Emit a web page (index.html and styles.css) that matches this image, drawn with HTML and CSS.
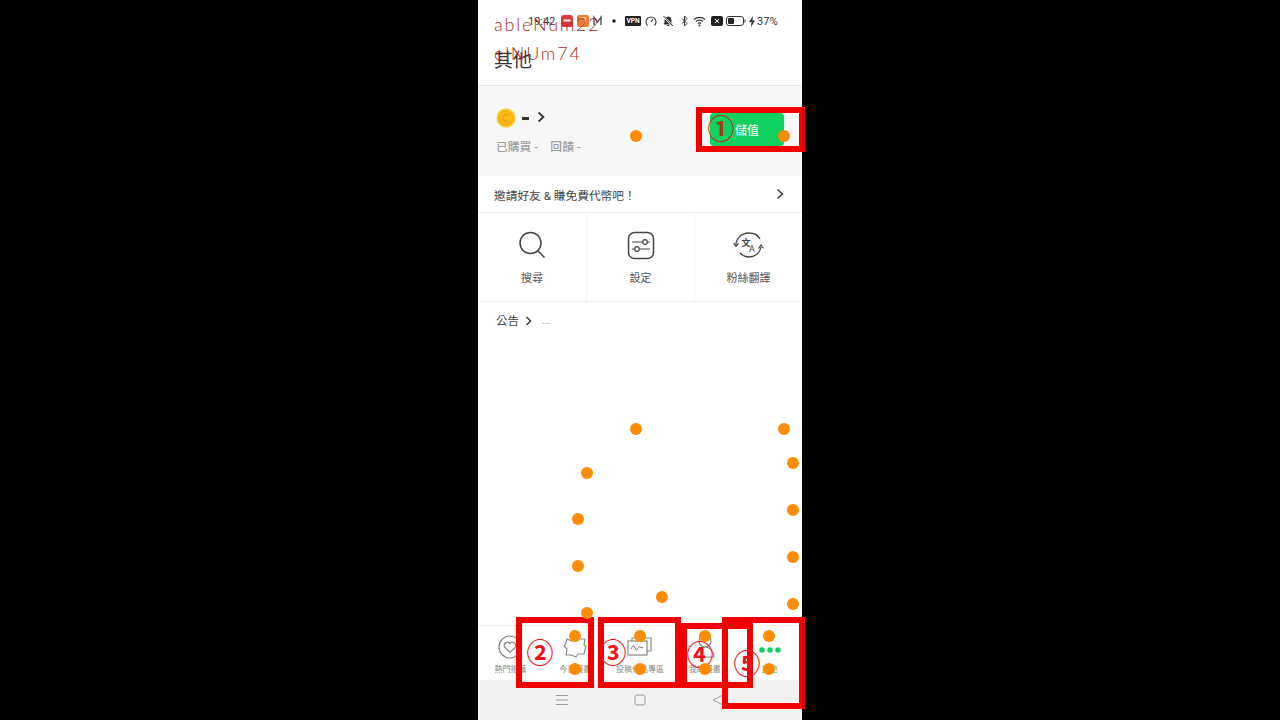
FILE: index.html
```html
<!DOCTYPE html>
<html lang="zh-Hant">
<head>
  <meta charset="UTF-8">
  <meta name="viewport" content="width=device-width, initial-scale=1.0">
  <title>其他</title>
  <link rel="stylesheet" href="styles.css">
</head>
<body>
  <div class="phone">
    <div class="status-bar">
      <span class="clock">19:42</span>
      <svg class="status-apps" width="58" height="14" viewBox="0 0 58 14">
        <rect x="0" y="1" width="12" height="12" rx="3" fill="#e5333b"/>
        <rect x="2.500" y="5.500" width="7" height="2" fill="#fff"/>
        <rect x="16" y="1" width="12" height="12" rx="2" fill="#ef7d2b"/>
        <path d="M19 4h6l-2 3h2l-4 4" fill="none" stroke="#fff" stroke-width="1"/>
        <path d="M33 11V3l3.500 5L40 3v8" fill="none" stroke="#444" stroke-width="1.300"/>
        <circle cx="53" cy="7" r="1.800" fill="#222"/>
      </svg>
      <span class="status-right">
        <span class="vpn">VPN</span>
        <svg width="12" height="12" viewBox="0 0 12 12"><path d="M2.500 10.500a5 5 0 1 1 7 0" fill="none" stroke="#333" stroke-width="1.100"/><path d="M6 7l2-3" stroke="#333" stroke-width="1.100"/></svg>
        <svg width="14" height="12" viewBox="0 0 14 12"><path d="M3 9h8l-1-1.500V5a3 3 0 0 0-6 0v2.500zM6 10.500h2" fill="#333" stroke="#333"/><path d="M2 1l10 10" stroke="#fff" stroke-width="2"/><path d="M2.500 1l9.500 10" stroke="#333"/></svg>
        <svg class="bluetooth" width="8" height="12" viewBox="0 0 8 12"><path d="M1 3.500l5 5-2.500 2.500V1L6 3.500l-5 5" fill="none" stroke="#333"/></svg>
        <svg width="14" height="12" viewBox="0 0 14 12"><path d="M1 4.500a8 8 0 0 1 11 0M3 6.500a5 5 0 0 1 7 0M5 8.500a2.500 2.500 0 0 1 3 0" fill="none" stroke="#333" stroke-width="1.200"/><circle cx="6.500" cy="10.500" r="1" fill="#333"/></svg>
        <svg width="12" height="10" viewBox="0 0 12 10"><rect width="12" height="10" rx="2" fill="#222"/><path d="M4 3l4 4M8 3L4 7" stroke="#fff"/></svg>
        <svg class="battery" width="20" height="10" viewBox="0 0 20 10"><rect x=".5" y=".5" width="17" height="9" rx="2.500" fill="none" stroke="#333"/><rect x="2" y="2" width="6" height="6" rx="1" fill="#222"/><rect x="18.500" y="3.500" width="1" height="3" fill="#333"/></svg>
        <svg class="bolt" width="6" height="11" viewBox="0 0 6 11"><path d="M4 0L0 6h2.500L2 11l4-6.500H3.500z" fill="#333"/></svg>
        <span class="percent">37%</span>
      </span>
    </div>

    <header class="page-title">其他</header>

    <section class="wallet">
      <div>
        <div class="balance">
          <svg width="20" height="20" viewBox="0 0 20 20"><circle cx="10" cy="10" r="9.500" fill="#fbc820"/><circle cx="10" cy="10" r="7" fill="#f9bd12" stroke="#f2a50c"/><path d="M12.500 7.500a3.500 3.500 0 1 0 0 5" fill="none" stroke="#ee9c08" stroke-width="1.600"/></svg>
          <span class="balance-dash"></span>
          <svg class="chevron" width="8" height="12" viewBox="0 0 8 12"><path d="M1.500 1.500L6.500 6l-5 4.500" fill="none" stroke="#333" stroke-width="1.700"/></svg>
        </div>
        <div class="wallet-stats"><span>已購買 -</span><span>回饋 -</span></div>
      </div>
      <button class="topup" type="button">儲值</button>
    </section>

    <div class="invite">
      <span>邀請好友 &amp; 賺免費代幣吧！</span>
      <svg width="8" height="12" viewBox="0 0 8 12"><path d="M1.500 1.500L6.500 6l-5 4.500" fill="none" stroke="#333" stroke-width="1.400"/></svg>
    </div>

    <nav class="shortcuts">
      <div class="shortcut">
        <svg width="30" height="30" viewBox="0 0 30 30"><circle cx="13.500" cy="13" r="10.500" fill="none" stroke="#444" stroke-width="1.500"/><path d="M21 21l6.500 6.500" stroke="#444" stroke-width="1.500"/></svg>
        <span>搜尋</span>
      </div>
      <div class="shortcut">
        <svg width="30" height="30" viewBox="0 0 30 30"><rect x="2.500" y="2.500" width="25" height="26" rx="6" fill="none" stroke="#444" stroke-width="1.500"/><path d="M6 12h18M6 19h18" stroke="#444" stroke-width="1.200"/><circle cx="19" cy="12" r="2.300" fill="#fff" stroke="#444" stroke-width="1.200"/><circle cx="11" cy="19" r="2.300" fill="#fff" stroke="#444" stroke-width="1.200"/></svg>
        <span>設定</span>
      </div>
      <div class="shortcut">
        <svg width="34" height="30" viewBox="0 0 34 30"><path d="M4 15C4 8 10 3 17 3c5 0 9 2 11 6M8 23c3 3 6 4 9 4 6 0 11-4 12-10" fill="none" stroke="#444" stroke-width="1.300"/><path d="M1.500 13L4 16.500 6.500 13M26.500 18.500L29 15l2.500 3.500" fill="none" stroke="#444" stroke-width="1.200"/><text x="9.500" y="16" class="translate-a">文</text><text x="17" y="22" class="translate-b">A</text></svg>
        <span>粉絲翻譯</span>
      </div>
    </nav>

    <div class="notice">
      <span>公告</span>
      <svg width="7" height="10" viewBox="0 0 7 10"><path d="M1.500 1L5.500 5l-4 4" fill="none" stroke="#333" stroke-width="1.400"/></svg>
      <span class="notice-text">...</span>
    </div>

    <div class="spacer"></div>

    <footer class="tabbar">
      <div class="tab">
        <svg width="26" height="26" viewBox="0 0 26 26"><circle cx="13" cy="13" r="11" fill="none" stroke="#888" stroke-width="1.200"/><path d="M13 18.500l-5-5a3 3 0 0 1 5-4 3 3 0 0 1 5 4z" fill="none" stroke="#888" stroke-width="1.200"/></svg>
        <span>熱門推薦</span>
      </div>
      <div class="tab">
        <svg width="26" height="26" viewBox="0 0 26 26"><path d="M5 5l5 2 4-3 3 1 6 0-1 6 2 1-2 8-6 0-2 3-5-2-5 0 1-6-3-3 2-3z" fill="none" stroke="#888" stroke-width="1.200" stroke-linejoin="round"/></svg>
        <span>今日漫畫</span>
      </div>
      <div class="tab">
        <svg width="26" height="26" viewBox="0 0 26 26"><rect x="1" y="7" width="19" height="14" fill="#fff" stroke="#888" stroke-width="1.200"/><path d="M5 7V4h19v13h-4" fill="none" stroke="#888" stroke-width="1.200"/><path d="M4 15c2-4 3-4 4-1s2 2 3 0 2-1 5 0" fill="none" stroke="#666" stroke-width="1"/></svg>
        <span>投稿作品專區</span>
      </div>
      <div class="tab">
        <svg width="26" height="26" viewBox="0 0 26 26"><circle cx="13" cy="7" r="6" fill="none" stroke="#888" stroke-width="1.200"/><path d="M4 23a9 10 0 0 1 18 0z" fill="none" stroke="#888" stroke-width="1.200"/></svg>
        <span>我的漫畫</span>
      </div>
      <div class="tab tab-active">
        <svg width="26" height="26" viewBox="0 0 26 26"><circle cx="5" cy="16" r="2.800" fill="#10d060"/><circle cx="13" cy="16" r="2.800" fill="#10d060"/><circle cx="21" cy="16" r="2.800" fill="#10d060"/></svg>
        <span>其他</span>
      </div>
    </footer>

    <div class="system-nav">
      <svg width="12" height="12" viewBox="0 0 12 12"><path d="M0 1.500h12M0 6h12M0 10.500h12" stroke="#999"/></svg>
      <svg width="12" height="12" viewBox="0 0 12 12"><rect x="1" y="1" width="10" height="10" rx="2" fill="none" stroke="#999"/></svg>
      <svg width="12" height="12" viewBox="0 0 12 12"><path d="M11 1L1 6l10 5z" fill="none" stroke="#999"/></svg>
    </div>

    <!-- annotations drawn on top of the screenshot -->
    <svg class="annotations" width="330" height="720" viewBox="478 0 330 720">
      <text class="mark-label" x="494" y="31">ableNum22</text>
      <text class="mark-label" x="494" y="60">elNUm74</text>

      <g class="boxes">
        <rect x="699" y="110" width="103" height="39"/>
        <rect x="519" y="620" width="72" height="65"/>
        <rect x="601" y="620" width="77" height="65"/>
        <rect x="684" y="626" width="66" height="59"/>
        <rect x="725" y="620" width="77" height="86"/>
      </g>

      <text class="step step-dark" x="721" y="139">①</text>
      <text class="step" x="540" y="663">②</text>
      <text class="step" x="613" y="663">③</text>
      <text class="step" x="700" y="665">④</text>
      <text class="step" x="747" y="674">⑤</text>

      <g class="dots">
        <circle cx="636" cy="136" r="6"/><circle cx="784" cy="136" r="6"/>
        <circle cx="636" cy="429" r="6"/><circle cx="784" cy="429" r="6"/>
        <circle cx="587" cy="473" r="6"/><circle cx="793" cy="463" r="6"/>
        <circle cx="578" cy="519" r="6"/><circle cx="793" cy="510" r="6"/>
        <circle cx="578" cy="566" r="6"/><circle cx="793" cy="557" r="6"/>
        <circle cx="587" cy="613" r="6"/><circle cx="793" cy="604" r="6"/>
        <circle cx="662" cy="597" r="6"/>
        <circle cx="575" cy="636" r="6"/><circle cx="640" cy="636" r="6"/>
        <circle cx="705" cy="636" r="6"/><circle cx="769" cy="636" r="6"/>
        <circle cx="575" cy="669" r="6"/><circle cx="640" cy="669" r="6"/>
        <circle cx="705" cy="669" r="6"/><circle cx="769" cy="669" r="6"/>
      </g>
    </svg>
  </div>
</body>
</html>
```

FILE: styles.css
```css
* {
  box-sizing: border-box;
}
body {
  font-family: Roboto, "Noto Sans CJK TC", sans-serif;
  background-color: #000;
  margin: 0;
  display: flex;
  justify-content: center;
  height: 100vh;
  overflow: hidden;
}
.phone {
  position: relative;
  width: 324px;
  height: 720px;
  background-color: #fff;
  color: #333;
  display: flex;
  flex-direction: column;
}

/* status bar */
.status-bar {
  height: 42px;
  display: flex;
  align-items: center;
  padding: 0 24px 0 50px;
  font-size: 11px;
}
.clock {
  width: 33px;
  color: #333;
}
.status-right {
  margin-left: auto;
  display: flex;
  align-items: center;
  gap: 4px;
}
.vpn {
  width: 16px;
  background-color: #222;
  color: #fff;
  font-size: 6.500px;
  font-weight: 700;
  line-height: 10px;
  text-align: center;
  border-radius: 1px;
}
.bluetooth {
  margin-left: 2px;
}
.battery,
.bolt {
  margin-left: -1px;
}
.percent {
  font-size: 11px;
  margin-left: -2px;
  letter-spacing: .2px;
}

.page-title {
  height: 44px;
  padding: 6px 16px 0;
  font-size: 19px;
  line-height: 26px;
  color: #333;
  border-bottom: 1px solid #e8e8e8;
}

/* wallet */
.wallet {
  height: 90px;
  background-color: #f7f7f7;
  display: flex;
  align-items: flex-start;
  justify-content: space-between;
  padding: 22px 18px 0;
}
.balance {
  display: flex;
  align-items: center;
  height: 20px;
}
.balance-dash {
  width: 7px;
  height: 3px;
  margin: 1px 8px 0 6px;
  background-color: #333;
}
.chevron {
  margin-top: -3px;
}
.wallet-stats {
  display: flex;
  gap: 12px;
  margin-top: 10px;
  font-size: 11.800px;
  line-height: 18px;
  color: #a0a0a0;
  font-weight: 500;
}
.topup {
  width: 74px;
  height: 33px;
  margin-top: 5px;
  border: none;
  border-radius: 4px;
  background-color: #10d060;
  color: #fff;
  font: inherit;
  font-size: 12px;
}

.invite {
  height: 37px;
  display: flex;
  align-items: center;
  justify-content: space-between;
  padding: 0 18px 0 16px;
  font-size: 11.700px;
  color: #444;
  border-bottom: 1px solid #eee;
}

/* shortcuts */
.shortcuts {
  height: 89px;
  display: grid;
  grid-template-columns: repeat(3, 1fr);
  border-bottom: 1px solid #eee;
}
.shortcut {
  display: flex;
  flex-direction: column;
  align-items: center;
  padding-top: 17px;
  gap: 11px;
  font-size: 11px;
  line-height: 16px;
  color: #555;
}
.shortcut + .shortcut {
  border-left: 1px solid #f4f4f4;
}
.translate-a {
  font-size: 9px;
  font-weight: 700;
  fill: #444;
}
.translate-b {
  font-size: 9px;
  fill: #444;
}

.notice {
  display: flex;
  align-items: center;
  gap: 6px;
  padding: 11px 18px 0;
  font-size: 11.500px;
  line-height: 16px;
  color: #444;
}
.notice-text {
  margin-left: 4px;
  color: #999;
  font-size: 10px;
}
.spacer {
  flex: 1;
}

/* bottom tabs */
.tabbar {
  height: 55px;
  display: grid;
  grid-template-columns: repeat(5, 1fr);
  border-top: 1px solid #eee;
}
.tab {
  display: flex;
  flex-direction: column;
  align-items: center;
  padding-top: 8px;
  font-size: 8px;
  line-height: 12px;
  color: #888;
  gap: 4px;
}
.tab-active {
  color: #10b055;
}
.system-nav {
  height: 40px;
  background-color: #f2f2f2;
  display: flex;
  align-items: center;
  justify-content: center;
  gap: 66px;
}

/* overlay */
.annotations {
  position: absolute;
  top: 0;
  left: 0;
  pointer-events: none;
}
.mark-label {
  font-family: Lato, sans-serif;
  font-size: 18px;
  font-weight: 300;
  letter-spacing: 1.800px;
  fill: #a82d28;
}
.boxes rect {
  fill: none;
  stroke: #f00000;
  stroke-width: 6;
}
.step {
  font-family: "Noto Sans CJK TC", sans-serif;
  font-size: 27px;
  font-weight: 700;
  text-anchor: middle;
  fill: #f0101a;
}
.step-dark {
  fill: #a93a1c;
}
.dots circle {
  fill: #fb8c05;
}
```
